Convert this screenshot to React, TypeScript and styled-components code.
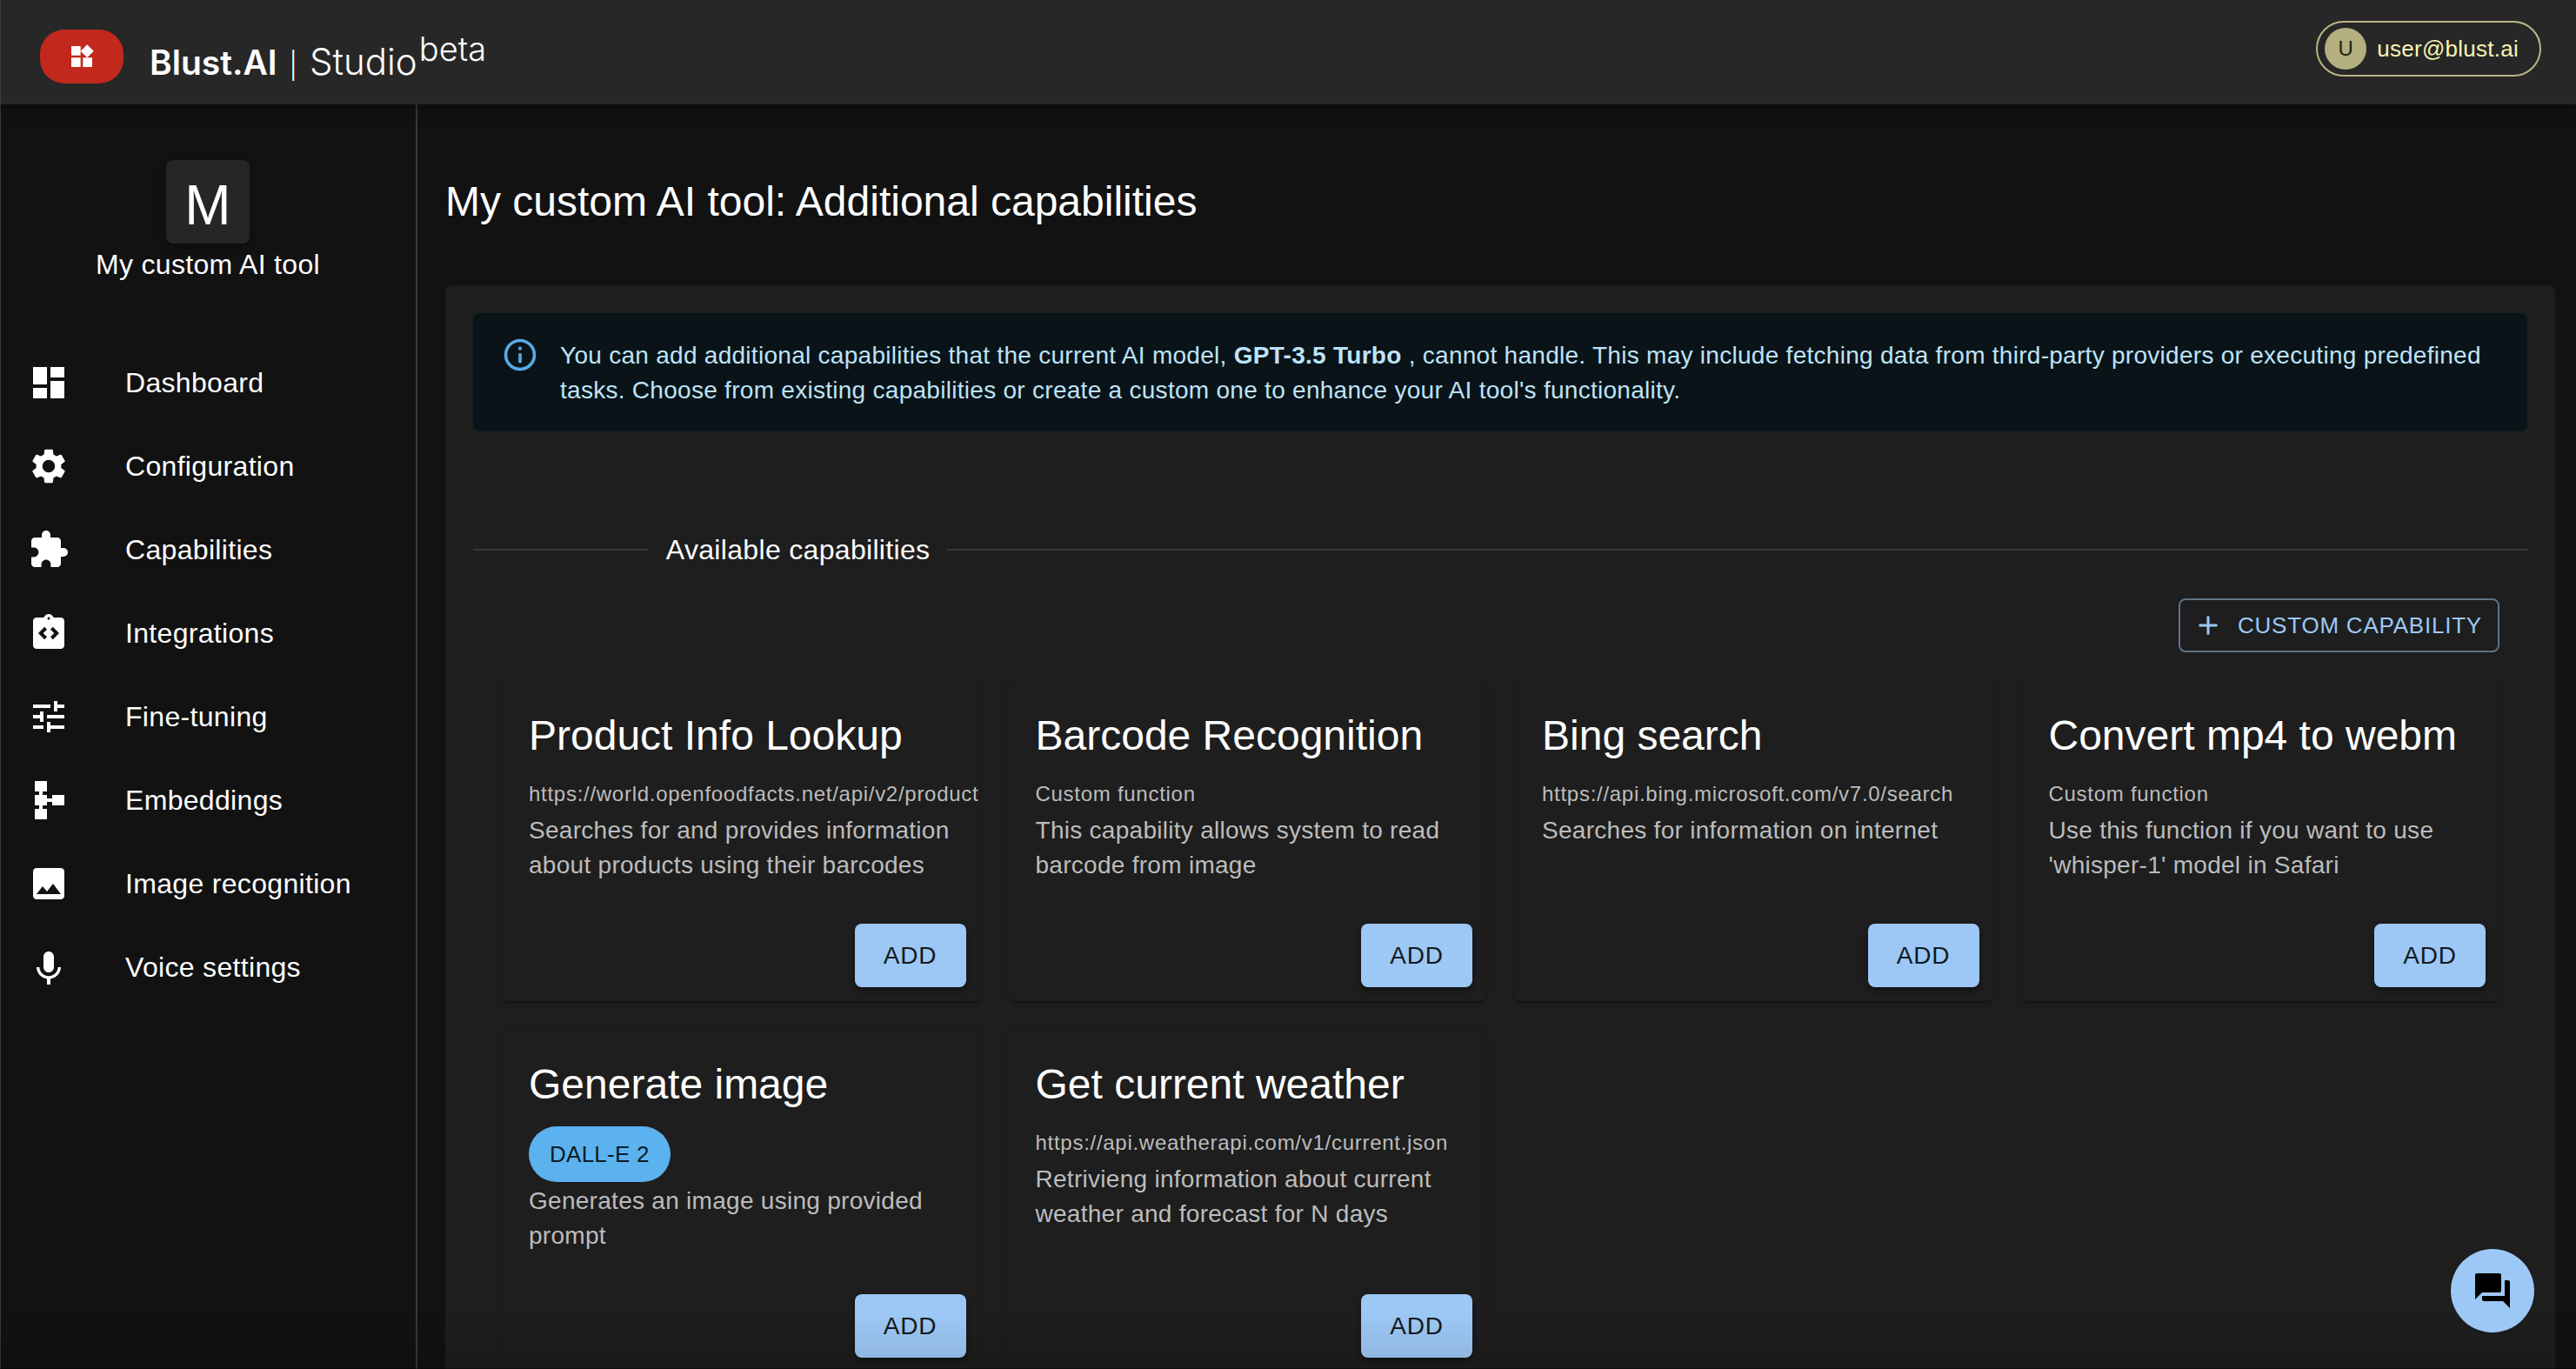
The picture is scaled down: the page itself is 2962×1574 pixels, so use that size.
import React from 'react';
import styled, { createGlobalStyle, ThemeProvider } from 'styled-components';
import {
  MdAdd,
  MdDashboard,
  MdExtension,
  MdImage,
  MdIntegrationInstructions,
  MdKeyboardVoice,
  MdOutlineInfo,
  MdQuestionAnswer,
  MdSchema,
  MdSettings,
  MdTune,
  MdWidgets,
} from 'react-icons/md';
import type { IconType } from 'react-icons';

const theme = {
  background: '#121212',
  paper: '#1e1e1e',
  bar: '#272727',
  line: '#383838',
  text: '#ffffff',
  muted: '#bcbcbc',
  primary: '#9dc8f5',
  info: '#5bb2ee',
  accent: '#f8f4b4',
};

const GlobalStyle = createGlobalStyle`
  *, *::before, *::after { box-sizing: border-box; }
  body {
    margin: 0;
    background: #121212;
    color: #ffffff;
    font-family: "Liberation Sans", Helvetica, Arial, sans-serif;
    font-size: 32px;
    line-height: 48px;
  }
  button { font-family: inherit; cursor: pointer; }
  svg { display: block; flex-shrink: 0; }
`;

const Shell = styled.div`
  display: flex;
  flex-direction: column;
  height: 100vh;
  overflow: hidden;
  box-shadow: inset 1px 0 ${(p) => p.theme.line};
`;

const TopBar = styled.header`
  position: relative;
  z-index: 1;
  display: flex;
  flex-shrink: 0;
  align-items: center;
  justify-content: space-between;
  height: 120px;
  padding: 0 40px 8px 46px;
  background: ${(p) => p.theme.bar};
  box-shadow: 0 4px 8px rgba(0, 0, 0, 0.24), 0 8px 20px rgba(0, 0, 0, 0.14),
    inset 1px 0 #3c3c3c;
`;

const Brand = styled.div`
  display: flex;
  align-items: center;
  gap: 30px;
  padding-top: 18px;
`;

const LogoButton = styled.button`
  display: grid;
  place-items: center;
  width: 96px;
  height: 62px;
  padding: 0;
  border: 0;
  border-radius: 28px;
  background: #c2291d;
  color: #ffffff;
`;

const BrandName = styled.div`
  display: flex;
  align-items: baseline;
  gap: 14px;
  height: 56px;
  color: ${(p) => p.theme.text};
  font-family: Inter, "Open Sans", sans-serif;
  font-size: 39px;
  font-weight: 300;
  line-height: 50px;
  white-space: nowrap;

  strong { font-weight: 600; }
`;

const BrandBar = styled.span`
  font-size: 30px;
`;

const BrandProduct = styled.span`
  font-size: 42px;

  sup {
    margin-left: 2px;
    font-size: 38px;
    line-height: 1;
    vertical-align: 16px;
  }
`;

const UserChip = styled.button`
  display: flex;
  align-items: center;
  gap: 12px;
  height: 64px;
  padding: 0 24px 0 8px;
  border: 2px solid #bbb785;
  border-radius: 32px;
  background: transparent;
  color: ${(p) => p.theme.accent};
  font-size: 26px;
  letter-spacing: 0.01em;
`;

const UserAvatar = styled.span`
  display: grid;
  place-items: center;
  width: 48px;
  height: 48px;
  border-radius: 50%;
  background: #b3af7e;
  color: #1e1e14;
  font-size: 24px;
`;

const Body = styled.div`
  display: flex;
  flex: 1;
  min-height: 0;
`;

const Sidebar = styled.aside`
  flex: 0 0 480px;
  padding-top: 64px;
  border-right: 2px solid ${(p) => p.theme.line};
`;

const ToolHeader = styled.div`
  display: flex;
  flex-direction: column;
  align-items: center;
  padding-bottom: 64px;
  letter-spacing: 0.01em;
`;

const ToolAvatar = styled.div`
  display: grid;
  place-items: center;
  width: 96px;
  height: 96px;
  padding-top: 8px;
  border-radius: 8px;
  background: #262626;
  box-shadow: 0 4px 8px rgba(0, 0, 0, 0.3);
  font-size: 64px;
  line-height: 80px;
`;

const NavLink = styled.a`
  display: flex;
  align-items: center;
  gap: 64px;
  height: 96px;
  padding: 0 32px;
  color: ${(p) => p.theme.text};
  letter-spacing: 0.01em;
  text-decoration: none;
`;

const Main = styled.main`
  flex: 1;
  min-width: 0;
  overflow-y: auto;
  scrollbar-width: none;
  padding: 80px 24px 32px 32px;
`;

const PageTitle = styled.h1`
  margin: 0 0 64px;
  font-size: 48px;
  font-weight: 400;
  line-height: 64px;
`;

const Panel = styled.section`
  padding: 32px;
  border-radius: 8px;
  background: ${(p) => p.theme.paper};
`;

const Alert = styled.div`
  display: flex;
  gap: 24px;
  padding: 26px 32px 27px;
  border-radius: 8px;
  background: #0a1318;
  color: #bde3f8;
  font-size: 28px;
  letter-spacing: 0.01em;
  line-height: 40px;

  svg { color: #58a9e2; }
  p { margin: 0; padding-top: 3px; }
`;

const Divider = styled.h2`
  display: flex;
  align-items: center;
  gap: 20px;
  margin: 112px 0 32px;
  font-size: 32px;
  font-weight: 400;
  letter-spacing: 0.01em;
  line-height: 48px;
  white-space: nowrap;

  &::before, &::after {
    content: '';
    flex: 1;
    height: 2px;
    background: ${(p) => p.theme.line};
  }
  &::after { flex: 9; }
`;

const Content = styled.div`
  padding: 0 32px;
`;

const Toolbar = styled.div`
  display: flex;
  justify-content: flex-end;
  margin-bottom: 32px;
`;

const OutlinedButton = styled.button`
  display: flex;
  align-items: center;
  gap: 16px;
  height: 62px;
  padding: 0 18px 0 14px;
  border: 2px solid #5d7487;
  border-radius: 8px;
  background: transparent;
  color: ${(p) => p.theme.primary};
  font-size: 26px;
  letter-spacing: 0.03em;
  text-transform: uppercase;
`;

const CardGrid = styled.div`
  display: grid;
  grid-template-columns: repeat(4, minmax(0, 1fr));
  gap: 32px;
`;

const Card = styled.article`
  display: flex;
  flex-direction: column;
  overflow: hidden;
  border-radius: 8px;
  background: ${(p) => p.theme.paper};
  box-shadow: 0 4px 2px -2px rgba(0, 0, 0, 0.2), 0 2px 2px rgba(0, 0, 0, 0.1),
    0 2px 6px rgba(0, 0, 0, 0.08);
`;

const CardBody = styled.div`
  flex: 1;
  padding: 32px 32px 31px;
`;

const CardTitle = styled.h3`
  margin: 0 0 16px;
  font-size: 48px;
  font-weight: 400;
  line-height: 64px;
  white-space: nowrap;
`;

const Source = styled.div`
  margin-bottom: 3px;
  color: ${(p) => p.theme.muted};
  font-size: 24px;
  letter-spacing: 0.03em;
  line-height: 38px;
  white-space: nowrap;
`;

const ModelChip = styled.span`
  display: flex;
  align-items: center;
  width: max-content;
  height: 64px;
  margin-bottom: 2px;
  padding: 0 24px;
  border-radius: 32px;
  background: ${(p) => p.theme.info};
  color: #0d1c26;
  font-size: 26px;
  letter-spacing: 0.01em;
`;

const Description = styled.p`
  margin: 0;
  color: ${(p) => p.theme.muted};
  font-size: 28px;
  letter-spacing: 0.01em;
  line-height: 40px;
`;

const CardActions = styled.div`
  display: flex;
  justify-content: flex-end;
  padding: 16px;
`;

const AddButton = styled.button`
  min-width: 128px;
  padding: 12px 32px;
  border: 0;
  border-radius: 8px;
  background: ${(p) => p.theme.primary};
  box-shadow: 0 4px 4px rgba(0, 0, 0, 0.3), 0 2px 10px rgba(0, 0, 0, 0.12);
  color: #121a21;
  font-size: 28px;
  letter-spacing: 0.03em;
  line-height: 49px;
`;

const ChatButton = styled.button`
  position: fixed;
  right: 48px;
  bottom: 42px;
  z-index: 2;
  display: grid;
  place-items: center;
  width: 96px;
  height: 96px;
  padding: 0;
  border: 0;
  border-radius: 50%;
  background: ${(p) => p.theme.primary};
  color: #000000;
`;

const BottomShade = styled.div`
  position: fixed;
  right: 0;
  bottom: 0;
  left: 0;
  height: 64px;
  background: linear-gradient(transparent, rgba(0, 0, 0, 0.1));
  box-shadow: inset 0 -1px rgba(0, 0, 0, 0.4);
  pointer-events: none;
`;

const navItems: { label: string; Icon: IconType }[] = [
  { label: 'Dashboard', Icon: MdDashboard },
  { label: 'Configuration', Icon: MdSettings },
  { label: 'Capabilities', Icon: MdExtension },
  { label: 'Integrations', Icon: MdIntegrationInstructions },
  { label: 'Fine-tuning', Icon: MdTune },
  { label: 'Embeddings', Icon: MdSchema },
  { label: 'Image recognition', Icon: MdImage },
  { label: 'Voice settings', Icon: MdKeyboardVoice },
];

interface Capability {
  title: string;
  source?: string;
  model?: string;
  description: string;
}

const capabilities: Capability[] = [
  {
    title: 'Product Info Lookup',
    source: 'https://world.openfoodfacts.net/api/v2/product',
    description: 'Searches for and provides information about products using their barcodes',
  },
  {
    title: 'Barcode Recognition',
    source: 'Custom function',
    description: 'This capability allows system to read barcode from image',
  },
  {
    title: 'Bing search',
    source: 'https://api.bing.microsoft.com/v7.0/search',
    description: 'Searches for information on internet',
  },
  {
    title: 'Convert mp4 to webm',
    source: 'Custom function',
    description: "Use this function if you want to use 'whisper-1' model in Safari",
  },
  {
    title: 'Generate image',
    model: 'DALL-E 2',
    description: 'Generates an image using provided prompt',
  },
  {
    title: 'Get current weather',
    source: 'https://api.weatherapi.com/v1/current.json',
    description: 'Retrivieng information about current weather and forecast for N days',
  },
];

function CapabilityCard({ title, source, model, description }: Capability) {
  return (
    <Card>
      <CardBody>
        <CardTitle>{title}</CardTitle>
        {source && <Source>{source}</Source>}
        {model && <ModelChip>{model}</ModelChip>}
        <Description>{description}</Description>
      </CardBody>
      <CardActions>
        <AddButton type="button">ADD</AddButton>
      </CardActions>
    </Card>
  );
}

export default function App() {
  return (
    <ThemeProvider theme={theme}>
      <GlobalStyle />
      <Shell>
        <TopBar>
          <Brand>
            <LogoButton type="button" aria-label="Apps">
              <MdWidgets size={32} />
            </LogoButton>
            <BrandName>
              <strong>Blust.AI</strong>
              <BrandBar>|</BrandBar>
              <BrandProduct>
                Studio<sup>beta</sup>
              </BrandProduct>
            </BrandName>
          </Brand>
          <UserChip type="button">
            <UserAvatar>U</UserAvatar>
            user@blust.ai
          </UserChip>
        </TopBar>
        <Body>
          <Sidebar>
            <ToolHeader>
              <ToolAvatar>M</ToolAvatar>
              My custom AI tool
            </ToolHeader>
            <nav>
              {navItems.map(({ label, Icon }) => (
                <NavLink key={label} href="#">
                  <Icon size={48} />
                  {label}
                </NavLink>
              ))}
            </nav>
          </Sidebar>
          <Main>
            <PageTitle>My custom AI tool: Additional capabilities</PageTitle>
            <Panel>
              <Alert>
                <MdOutlineInfo size={44} />
                <p>
                  You can add additional capabilities that the current AI model,{' '}
                  <strong>GPT-3.5 Turbo</strong> , cannot handle. This may include fetching data
                  from third-party providers or executing predefined tasks. Choose from existing
                  capabilities or create a custom one to enhance your AI tool's functionality.
                </p>
              </Alert>
              <Divider>Available capabilities</Divider>
              <Content>
                <Toolbar>
                  <OutlinedButton type="button">
                    <MdAdd size={36} />
                    Custom capability
                  </OutlinedButton>
                </Toolbar>
                <CardGrid>
                  {capabilities.map((item) => (
                    <CapabilityCard key={item.title} {...item} />
                  ))}
                </CardGrid>
              </Content>
            </Panel>
          </Main>
        </Body>
        <BottomShade />
        <ChatButton type="button" aria-label="Open chat">
          <MdQuestionAnswer size={48} />
        </ChatButton>
      </Shell>
    </ThemeProvider>
  );
}
